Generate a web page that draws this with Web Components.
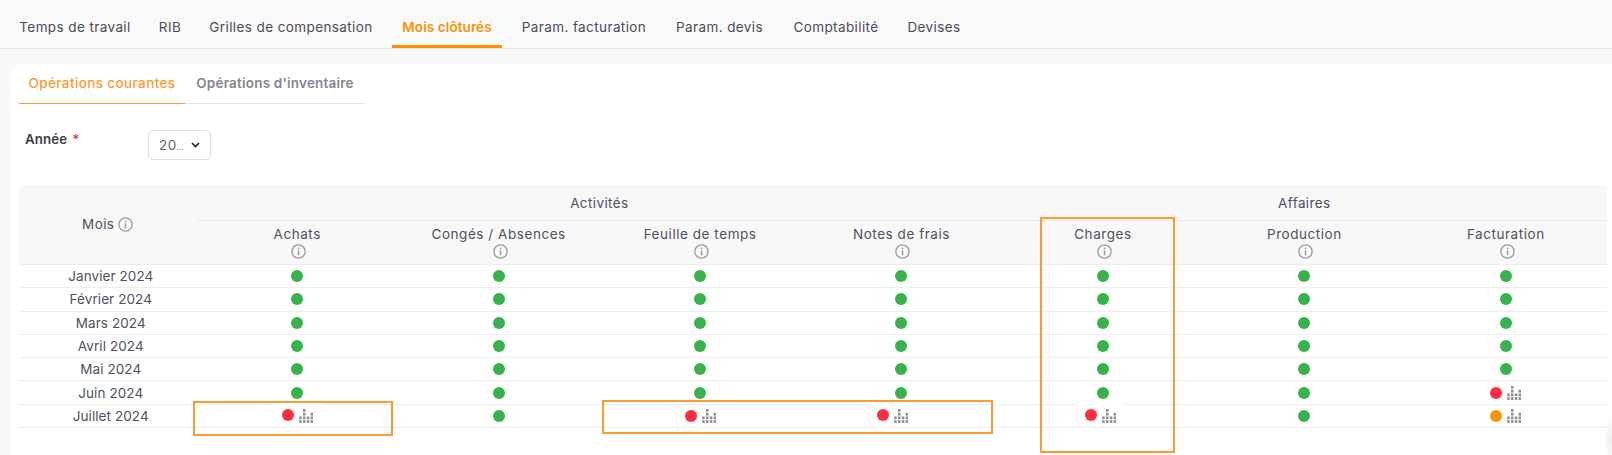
<!doctype html>
<html lang="fr"><head><meta charset="utf-8"><title>Mois clôturés</title>
<style>
html,body{margin:0;height:100%}
body{background:#f8f8f8;font:13.5px Inter,"Noto Sans",sans-serif;color:#50505f;overflow:hidden}
main{display:block;position:relative;width:1612px;height:455px}
</style></head><body>
<main>
<page-tabs>
  <top-tab w="131">Temps de travail</top-tab>
  <top-tab w="40">RIB</top-tab>
  <top-tab w="183">Grilles de compensation</top-tab>
  <top-tab w="110" active>Mois clôturés</top-tab>
  <top-tab w="145">Param. facturation</top-tab>
  <top-tab w="107">Param. devis</top-tab>
  <top-tab w="107">Comptabilité</top-tab>
  <top-tab w="70">Devises</top-tab>
</page-tabs>
<main-card>
  <sub-tabs>
    <sub-tab w="166" active>Opérations courantes</sub-tab>
    <sub-tab w="180">Opérations d'inventaire</sub-tab>
  </sub-tabs>
  <year-field label="Année" value="20"></year-field>
  <closure-table></closure-table>
</main-card>
<annot-box x="193" y="401" w="200" h="35"></annot-box>
<annot-box x="602" y="400" w="391" h="34"></annot-box>
<annot-box x="1040" y="217" w="135" h="236"></annot-box>
</main>
<script>
function def(name, css, html, init){
  customElements.define(name, class extends HTMLElement{
    constructor(){super();this.attachShadow({mode:'open'}).innerHTML='<style>'+css+'</style>'+(typeof html==='function'?html(this):html);}
    connectedCallback(){ if(init) init(this); }
  });
}
const TXT='font-family:Inter,"Noto Sans",sans-serif;letter-spacing:.4px;';
def('page-tabs',`:host{display:flex;gap:9.5px;height:48px;padding-left:9.5px;border-bottom:1px solid #e9e9e9;background:#f9f9f9}`,`<slot></slot>`);
def('top-tab',`:host{display:block;box-sizing:border-box;height:48px;padding-top:19px;line-height:17px;text-align:center;white-space:nowrap;font-size:13.5px;color:#4c4c58;${TXT}}
:host([active]){color:#ff9100;font-weight:600;letter-spacing:.1px;border-bottom:3px solid #ff9100}`,`<slot></slot>`,el=>{el.style.width=el.getAttribute('w')+'px'});
def('main-card',`:host{display:block;position:absolute;left:9.5px;right:0;top:64px;bottom:0;background:radial-gradient(ellipse 9px 26px at 100% 376px,#ededed,rgba(255,255,255,0)),#fff;border-top-left-radius:12px;padding-left:9.5px}`,`<slot></slot>`);
def('sub-tabs',`:host{display:flex;width:346px;height:39px;border-bottom:1px solid #e3e3e3}`,`<slot></slot>`);
def('sub-tab',`:host{display:block;height:28px;padding-top:11px;line-height:17px;text-align:center;white-space:nowrap;font-size:13.5px;font-weight:600;color:#85858f;${TXT};letter-spacing:.2px}
:host([active]){font-weight:500;color:#ff9b30;letter-spacing:.38px;border-bottom:1px solid #ff9b30}`,`<slot></slot>`,el=>{el.style.width=el.getAttribute('w')+'px'});
def('year-field',`:host{display:flex;align-items:flex-start;margin-top:26px;margin-bottom:25px;height:30px}
.l{width:129px;padding-left:6px;box-sizing:border-box;font-weight:600;font-size:13.3px;line-height:18px;color:#3d3d48;font-family:Inter,"Noto Sans",sans-serif;letter-spacing:.12px}
.r{color:#ff3346;margin-left:5px}
.s{width:63px;height:30px;box-sizing:border-box;border:1px solid #dedede;border-radius:5px;background:#fff;display:flex;align-items:center;padding-left:10px;color:#666;font-size:13.5px;${TXT}}
.s span{width:27px;white-space:nowrap}
.s small{font-size:8px;letter-spacing:0}
svg{margin-left:5px}`,el=>`<div class="l">${el.getAttribute('label')}<span class="r">*</span></div><div class="s"><span>${el.getAttribute('value')}<small>…</small></span><svg width="9" height="6" viewBox="0 0 9 6"><path d="M1 1l3.5 3.5L8 1" fill="none" stroke="#222" stroke-width="1.6"/></svg></div>`);
def('info-icon',`:host{display:block;flex:none;width:15px;height:15px}svg{display:block}`,`<svg width="15" height="15" viewBox="0 0 15 15"><circle cx="7.5" cy="7.5" r="6.6" fill="none" stroke="#9c9c9c" stroke-width="1.3"/><rect x="6.8" y="6.4" width="1.5" height="4.9" fill="#9c9c9c"/><rect x="6.8" y="3.7" width="1.5" height="1.6" fill="#9c9c9c"/></svg>`);
def('status-dot',`:host{display:block;flex:none;width:12px;height:12px;border-radius:50%;background:#36b34a}
:host([s=red]){background:#ff2d41}:host([s=orange]){background:#ff9500}`,``);
def('dots-chart',`:host{display:block;flex:none;width:14px;height:14px}svg{display:block}`,()=>{
  const cols=[[2,3],[0,1,2,3],[2,3],[1,2,3]],ys=[0,3.8,7.5,11.2];let r='';
  cols.forEach((c,i)=>c.forEach(j=>{r+=`<rect x="${i*3.8+.2}" y="${ys[j]}" width="2.5" height="2.7" fill="#8c8c8c"/>`}));
  return `<svg width="14" height="14" viewBox="0 0 14 14">${r}</svg>`;
});
def('annot-box',`:host{display:block;position:absolute;box-sizing:border-box;border:2px solid #ff9a2e;pointer-events:none}`,``,el=>{
  const a=k=>el.getAttribute(k)+'px';el.style.left=a('x');el.style.top=a('y');el.style.width=a('w');el.style.height=a('h');});
const G='<status-dot></status-dot>';
const F=(s,up,d=0)=>`<span class="f${up?' up':''}" style="margin-left:${d*2}px"><status-dot s="${s}"></status-dot><dots-chart></dots-chart></span>${up?`<i class="patch" style="margin-left:${d-24.5}px"></i>`:''}`;
const rows=[
 ['Janvier 2024',G,G,G,G,G,G,G],
 ['Février 2024',G,G,G,G,G,G,G],
 ['Mars 2024',G,G,G,G,G,G,G],
 ['Avril 2024',G,G,G,G,G,G,G],
 ['Mai 2024',G,G,G,G,G,G,G],
 ['Juin 2024',G,G,G,G,G,G,F('red')],
 ['Juillet 2024',F('red',1,.5),G,F('red'),F('red',1,-8.5),F('red',1,-2),G,F('orange')]
];
const cols=['Achats','Congés / Absences','Feuille de temps','Notes de frais','Charges','Production','Facturation'];
def('closure-table',`:host{display:grid;width:1587.5px;grid-template-columns:177.5px repeat(7,1fr);grid-template-rows:36px 44px repeat(7,23.3px);font-size:13.5px;color:#50505f;${TXT}}
.h{background:#f8f8f8;display:flex;align-items:center;justify-content:center;box-sizing:border-box;white-space:nowrap}
.mois{grid-row:1/3;border-bottom:1px solid #ececec;gap:4px;padding-bottom:1px;border-top-left-radius:6px}
.grp{border-bottom:1px solid #ebebeb}
.g1{grid-column:span 4}.g2{grid-column:span 3;border-top-right-radius:6px}
.col{flex-direction:column;justify-content:flex-start;padding-top:4px;border-bottom:1px solid #ececec;line-height:18px;letter-spacing:.55px}
.col info-icon{margin:1px 0 0 3px}
.c{box-sizing:border-box;border-bottom:1px solid #eeeeee;display:flex;align-items:center;justify-content:center;position:relative;white-space:nowrap}
.m{padding-left:6px;letter-spacing:.08px}
.f{display:flex;align-items:center;gap:5px;padding-top:1px}
.f.up status-dot{margin-top:-2px}
.f.up dots-chart{margin-top:-1px}
.patch{position:absolute;left:50%;top:-1px;width:49px;height:2px;background:#fff}`,()=>{
  let h=`<div class="h mois"><span>Mois</span><info-icon></info-icon></div><div class="h grp g1">Activités</div><div class="h grp g2">Affaires</div>`;
  cols.forEach(c=>{h+=`<div class="h col"><span>${c}</span><info-icon></info-icon></div>`});
  rows.forEach(r=>r.forEach((v,i)=>{h+=`<div class="c${i?'':' m'}">${v}</div>`}));
  return h;
});
</script>
</body></html>
